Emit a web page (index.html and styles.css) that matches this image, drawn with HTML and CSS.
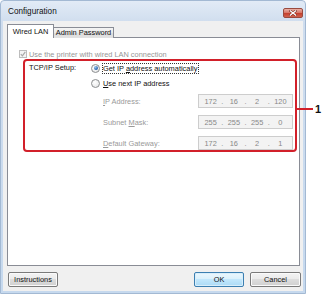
FILE: index.html
```html
<!DOCTYPE html>
<html>
<head>
<meta charset="utf-8">
<title>Configuration</title>
<link rel="stylesheet" href="styles.css">
</head>
<body>
<div class="stage">
  <div class="window">
    <div class="titlebar">
      <span class="title">Configuration</span>
      <div class="close">
        <svg width="8" height="6" viewBox="0 0 8 6">
          <path d="M1.2 0.8 L6.8 5.2 M6.8 0.8 L1.2 5.2" stroke="#7a2a1e" stroke-width="2.4" stroke-linecap="round"/>
          <path d="M1.2 0.8 L6.8 5.2 M6.8 0.8 L1.2 5.2" stroke="#ffffff" stroke-width="1.3" stroke-linecap="round"/>
        </svg>
      </div>
    </div>
    <div class="client">
      <div class="tabs">
        <div class="tab active">Wired LAN</div>
        <div class="tab">Admin Password</div>
      </div>
      <div class="panel">
        <div class="check-row">
          <span class="checkbox">
            <svg width="6" height="6" viewBox="0 0 6 6"><path d="M0.8 3.2 L2.4 4.8 L5.3 0.9" fill="none" stroke="#a8a8a8" stroke-width="1.2"/></svg>
          </span>
          <span class="check-text">Use the printer with wired LAN connection</span>
        </div>
        <div class="setup">
          <div class="setup-top">
            <span class="setup-label">TCP/IP Setup:</span>
            <div class="options">
              <div class="option"><span class="radio checked"></span><span class="opt-text focus">Get IP <u>a</u>ddress automatically</span></div>
              <div class="option"><span class="radio"></span><span class="opt-text"><u>U</u>se next IP address</span></div>
            </div>
          </div>
          <div class="fields">
            <span class="field-label"><u>I</u>P Address:</span>
            <div class="ip"><span>172</span><i>.</i><span>16</span><i>.</i><span>2</span><i>.</i><span>120</span></div>
            <span class="field-label">Subnet <u>M</u>ask:</span>
            <div class="ip"><span>255</span><i>.</i><span>255</span><i>.</i><span>255</span><i>.</i><span>0</span></div>
            <span class="field-label"><u>D</u>efault Gateway:</span>
            <div class="ip"><span>172</span><i>.</i><span>16</span><i>.</i><span>2</span><i>.</i><span>1</span></div>
          </div>
        </div>
      </div>
      <div class="buttons">
        <button class="btn">Instructions</button>
        <span class="spacer"></span>
        <button class="btn default">OK</button>
        <button class="btn cancel">Cancel</button>
      </div>
    </div>
  </div>
  <div class="callout"><span class="callout-line"></span><span class="callout-num">1</span></div>
</div>
</body>
</html>
```
FILE: styles.css
```css
* {
  box-sizing: border-box;
  margin: 0;
  padding: 0;
}

html, body {
  width: 324px;
  height: 295px;
  background: #ffffff;
  overflow: hidden;
}

body {
  font-family: "Liberation Sans", Arial, sans-serif;
  font-size: 7.4px;
  color: #111;
}

.stage {
  position: relative;
  width: 324px;
  height: 295px;
}

.window {
  width: 306px;
  height: 294px;
  display: flex;
  flex-direction: column;
  border: 1px solid #a3b9d3;
  border-radius: 4px 4px 0 0;
  background: linear-gradient(#e2ebf6, #cfddee 22px, #c6d9ee);
  padding: 0 2px 2px 2px;
}

.titlebar {
  height: 20px;
  display: flex;
  align-items: center;
  justify-content: space-between;
  padding-left: 5px;
}

.title {
  font-size: 8.2px;
  color: #111;
}

.close {
  width: 20px;
  height: 10px;
  margin-top: 3px;
  border: 1px solid #9a4a3e;
  border-radius: 2px;
  background: linear-gradient(#eab1a6, #d9786a 45%, #c5412e 55%, #d0624f);
  display: flex;
  align-items: center;
  justify-content: center;
}

.client {
  flex: 1;
  background: #f0f0f0;
  padding: 3px 2px 0 4px;
  display: flex;
  flex-direction: column;
}

.tabs {
  display: flex;
  align-items: flex-end;
  height: 14px;
  margin-bottom: -1px;
  position: relative;
  z-index: 1;
}

.tab {
  height: 11px;
  width: 60px;
  border: 1px solid #898c95;
  border-left: none;
  border-bottom: none;
  background: linear-gradient(#f4f4f4, #e9e9e9 50%, #dcdcdc 50%, #e2e2e2);
  display: flex;
  align-items: center;
  justify-content: center;
  line-height: 1;
}

.tab.active {
  height: 14px;
  width: 47px;
  border-left: 1px solid #898c95;
  background: #ffffff;
}

.panel {
  height: 229px;
  margin-right: 1px;
  background: #ffffff;
  border: 1px solid #898c95;
  padding: 12px 0 0 11px;
}

.check-row {
  display: flex;
  align-items: center;
  gap: 2px;
  height: 8px;
  color: #959595;
}

.checkbox {
  width: 8px;
  height: 8px;
  border: 1px solid #bdbdbd;
  background: #f4f4f4;
  display: flex;
  align-items: center;
  justify-content: center;
}

.setup {
  margin-top: 1px;
  margin-left: 4px;
  width: 274px;
  height: 93px;
  border: 2px solid #d2202a;
  border-radius: 4px;
  padding: 1px 2px 0 4px;
}

.setup-top {
  display: flex;
}

.setup-label {
  width: 62px;
  line-height: 12px;
}

.options {
  display: flex;
  flex-direction: column;
  gap: 3px;
}

.option {
  display: flex;
  align-items: center;
  gap: 2px;
  height: 12px;
}

.opt-text {
  border: 1px solid transparent;
  line-height: 9px;
  padding-right: 1px;
}

.opt-text.focus {
  border: 1px dotted #333;
}

.radio {
  width: 9px;
  height: 9px;
  border-radius: 50%;
  border: 1px solid #8c8e90;
  background: radial-gradient(circle at 40% 35%, #ffffff, #e2e3e4);
  position: relative;
}

.radio.checked::after {
  content: "";
  position: absolute;
  left: 1.5px;
  top: 1.5px;
  width: 4px;
  height: 4px;
  border-radius: 50%;
  background: radial-gradient(circle at 35% 30%, #9cc8f0, #2660ad 70%, #1b4b8c);
}

.fields {
  margin-top: 5px;
  margin-left: 74px;
  display: grid;
  grid-template-columns: 95px 95px;
  grid-auto-rows: 14px;
  row-gap: 7px;
  align-items: center;
}

.field-label {
  color: #999999;
}

.ip {
  height: 14px;
  border: 1px solid #cdcdcd;
  background: #f3f3f3;
  display: flex;
  align-items: center;
  padding: 0 2px;
  color: #888888;
}

.ip span {
  flex: 1;
  text-align: center;
}

.ip i {
  font-style: normal;
  width: 4px;
  text-align: center;
}

.buttons {
  margin-top: 6px;
  display: flex;
  gap: 6px;
  height: 15px;
  padding-left: 1px;
}

.spacer {
  flex: 1;
}

.btn {
  width: 50px;
  height: 15px;
  font-family: "Liberation Sans", Arial, sans-serif;
  font-size: 7.4px;
  color: #111;
  border: 1px solid #7a7a7a;
  border-radius: 2px;
  background: linear-gradient(#f3f3f3, #ebebeb 45%, #dddddd 50%, #d0d0d0);
  box-shadow: inset 0 0 0 1px #fafafa;
}

.btn.cancel {
  width: 51px;
}

.btn.default {
  border-color: #3c7fb1;
  background: linear-gradient(#ecf7fd, #dbf1fc 45%, #c2e7fc 50%, #abdaf5);
  box-shadow: inset 0 0 0 1px #d8eefb;
}

.callout {
  position: absolute;
  left: 297px;
  top: 103px;
  display: flex;
  align-items: center;
  height: 12px;
}

.callout-line {
  width: 16px;
  height: 2px;
  background: #d2202a;
}

.callout-num {
  margin-left: 2px;
  font-size: 11px;
  font-weight: bold;
  color: #111;
}
```
